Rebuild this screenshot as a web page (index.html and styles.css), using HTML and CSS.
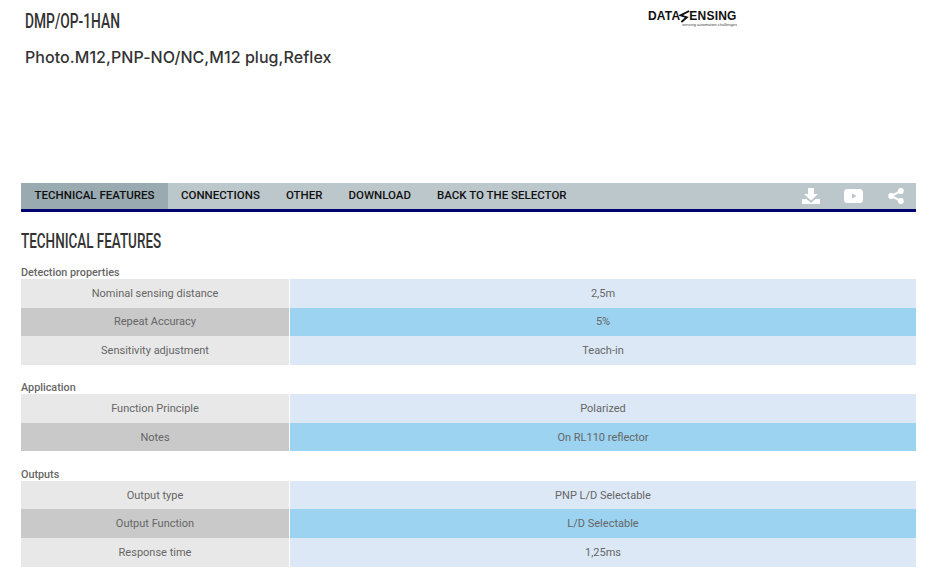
FILE: index.html
```html
<!DOCTYPE html>
<html lang="en">
<head>
<meta charset="utf-8">
<title>DMP/OP-1HAN</title>
<link rel="stylesheet" href="styles.css">
</head>
<body>
<header class="head">
  <div class="titles">
    <h1 class="code">DMP/OP-1HAN</h1>
    <h2 class="desc">Photo.M12,PNP-NO/NC,M12 plug,Reflex</h2>
  </div>
  <div class="logo">
    <div class="logo-word"><span>DATA</span><svg class="logo-s" viewBox="0 0 14 16" width="11" height="15"><path d="M13 1 2 6.5 10 9 3 15" fill="none" stroke="#111" stroke-width="2.4"/></svg><span>ENSING</span></div>
    <div class="logo-tag">sensing automation challenges</div>
  </div>
</header>
<nav class="nav">
  <a class="tab active">TECHNICAL FEATURES</a>
  <a class="tab">CONNECTIONS</a>
  <a class="tab">OTHER</a>
  <a class="tab">DOWNLOAD</a>
  <a class="tab">BACK TO THE SELECTOR</a>
  <div class="icons">
    <svg viewBox="0 0 18 16" width="18" height="16"><path fill="#fff" d="M6 0h6v6h4l-7 6.5L2 6h4zM0 11h4.5L9 15l4.5-4H18v5H0z"/></svg>
    <svg viewBox="0 0 20 14" width="20" height="14"><rect width="19" height="14" rx="3.5" fill="#fff"/><path fill="#bcc7cc" d="M8 4.2 12.5 7 8 9.8z"/></svg>
    <svg viewBox="0 0 16 16" width="16" height="16"><g fill="#fff"><circle cx="12.8" cy="3" r="3"/><circle cx="3.2" cy="8" r="3"/><circle cx="12.8" cy="13" r="3"/></g><path stroke="#fff" stroke-width="2" d="M12.8 3 3.2 8l9.6 5" fill="none"/></svg>
  </div>
</nav>
<main>
  <h3 class="section">TECHNICAL FEATURES</h3>
  <section class="group first">
    <div class="label">Detection properties</div>
    <div class="row"><div class="k">Nominal sensing distance</div><div class="v">2,5m</div></div>
    <div class="row alt"><div class="k">Repeat Accuracy</div><div class="v">5%</div></div>
    <div class="row"><div class="k">Sensitivity adjustment</div><div class="v">Teach-in</div></div>
  </section>
  <section class="group">
    <div class="label">Application</div>
    <div class="row"><div class="k">Function Principle</div><div class="v">Polarized</div></div>
    <div class="row alt"><div class="k">Notes</div><div class="v">On RL110 reflector</div></div>
  </section>
  <section class="group">
    <div class="label">Outputs</div>
    <div class="row"><div class="k">Output type</div><div class="v">PNP L/D Selectable</div></div>
    <div class="row alt"><div class="k">Output Function</div><div class="v">L/D Selectable</div></div>
    <div class="row"><div class="k">Response time</div><div class="v">1,25ms</div></div>
  </section>
</main>
</body>
</html>
```
FILE: styles.css
```css
* { box-sizing: border-box; }
html, body { margin: 0; padding: 0; background: #fff; }
body { font-family: "Roboto", "Liberation Sans", sans-serif; color: #333; width: 939px; height: 578px; overflow: hidden; padding: 0 23px 0 21px; }
.head { height: 183px; display: flex; position: relative; }
.titles { padding: 9px 0 0 4px; }
.code { margin: 0; font-family: "Roboto", sans-serif; font-weight: 500; font-size: 20px; line-height: 24px; color: #333; transform: scaleX(.69); transform-origin: left center; white-space: nowrap; }
.desc { margin: 12px 0 0; font-family: "Inter", sans-serif; font-weight: 500; font-size: 16px; line-height: 24px; color: #333; letter-spacing: .06px; }
.logo { position: absolute; left: 627px; top: 10px; width: 90px; }
.logo-word { display: flex; align-items: center; font-family: "Liberation Sans", sans-serif; font-weight: 700; font-size: 12px; line-height: 13px; height: 13px; color: #111; letter-spacing: .2px; }
.logo-s { margin: 0 -1px; flex: none; }
.logo-tag { font-family: "Liberation Sans", sans-serif; font-size: 4px; line-height: 4px; color: #444; text-align: right; padding-right: 1px; white-space: nowrap; }
.nav { height: 29px; display: flex; align-items: stretch; background: #bcc7cc; border-bottom: 3px solid #00046e; }
.tab { display: flex; align-items: center; padding: 0 13px 2px; font-family: "Roboto", sans-serif; font-weight: 500; font-size: 11.5px; color: #111; white-space: nowrap; }
.tab.active { background: #9aaab1; min-width: 147px; justify-content: center; }
.icons { margin-left: auto; display: flex; align-items: center; gap: 24px; padding-right: 12px; }
.section { margin: 21px 0 0; font-family: "Roboto", sans-serif; font-weight: 500; font-size: 19.5px; line-height: 18px; color: #333; transform: scaleX(.69); transform-origin: left center; white-space: nowrap; }
.group { margin-top: 16.4px; }
.group.first { margin-top: 15px; }
.label { font-size: 10.8px; font-weight: 500; line-height: 13px; color: #666; height: 13px; }
.row { display: grid; grid-template-columns: 268px 1fr; gap: 1px; height: 28.6px; font-size: 11px; color: #666; text-align: center; }
.k, .v { display: flex; align-items: center; justify-content: center; }
.k { background: #e8e8e8; }
.v { background: #dce8f6; }
.alt .k { background: #c9c9c9; }
.alt .v { background: #9bd3f0; }
```
